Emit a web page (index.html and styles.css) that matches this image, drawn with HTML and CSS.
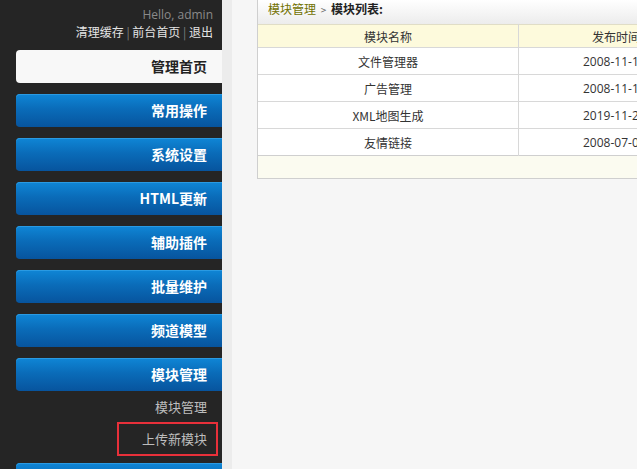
FILE: index.html
```html
<!DOCTYPE html>
<html lang="zh-CN">
<head>
  <meta charset="UTF-8">
  <title>后台管理 - 模块管理</title>
  <link rel="stylesheet" href="styles.css">
</head>
<body>
  <div class="layout">
    <div class="sidebar">
      <div class="user">
        <div class="hello">Hello, admin</div>
        <div class="links"><a href="#">清理缓存</a> | <a href="#">前台首页</a> | <a href="#">退出</a></div>
      </div>
      <ul class="menu">
        <li class="item home">管理首页</li>
        <li class="item">常用操作</li>
        <li class="item">系统设置</li>
        <li class="item">HTML更新</li>
        <li class="item">辅助插件</li>
        <li class="item">批量维护</li>
        <li class="item">频道模型</li>
        <li class="item">模块管理</li>
        <li class="sub first">模块管理</li>
        <li class="sub marked">上传新模块</li>
        <li class="item">会员管理</li>
      </ul>
    </div>

    <div class="main">
      <div class="panel">
        <div class="crumb"><a href="#">模块管理</a> <span class="gt">&gt;</span> <b>模块列表:</b></div>
        <table class="list">
          <tr class="head"><td class="c1">模块名称</td><td class="c2">发布时间</td></tr>
          <tr><td class="c1">文件管理器</td><td class="c2">2008-11-12</td></tr>
          <tr><td class="c1">广告管理</td><td class="c2">2008-11-12</td></tr>
          <tr><td class="c1">XML地图生成</td><td class="c2">2019-11-20</td></tr>
          <tr><td class="c1">友情链接</td><td class="c2">2008-07-08</td></tr>
          <tr class="foot"><td colspan="2"></td></tr>
        </table>
      </div>
    </div>
  </div>
</body>
</html>
```

FILE: styles.css
```css
body {
  margin: 0;
  font-family: "Noto Sans CJK SC", "Liberation Sans", sans-serif;
  background: #f6f6f6;
  overflow: hidden;
}
a {
  text-decoration: none;
  color: inherit;
}
.layout {
  display: flex;
  height: 469px;
}
.sidebar {
  width: 222px;
  flex: none;
  background: #252525;
  overflow: hidden;
}
.user {
  text-align: right;
  padding: 7px 9px 0 0;
  height: 43px;
  box-sizing: border-box;
}
.hello {
  font-family: "Open Sans", "Liberation Sans", sans-serif;
  font-size: 12px;
  line-height: 16px;
  color: #8a8a8a;
}
.links {
  font-size: 12px;
  line-height: 18px;
  color: #808080;
}
.links a {
  color: #e4e4e4;
}
.menu {
  list-style: none;
  margin: 0;
  padding: 0;
}
.item {
  margin: 7px 0 11px 16px;
  height: 33px;
  line-height: 33px;
  padding-right: 15px;
  text-align: right;
  font-size: 14px;
  font-weight: bold;
  color: #fff;
  border-radius: 4px 0 0 4px;
  background: linear-gradient(to bottom, #0f86d6 0%, #0a6cb9 45%, #07549e 100%);
  box-shadow: inset 0 1px 0 #2a9ae2;
}
.item.home {
  margin-top: 7px;
  background: #f8f8f8;
  color: #222;
  box-shadow: none;
}
.sub {
  margin-left: 117px;
  height: 31px;
  line-height: 27px;
  padding-right: 13px;
  text-align: right;
  font-size: 13px;
  color: #bdbdbd;
  box-sizing: border-box;
  border: 2px solid transparent;
}
.sub.first {
  margin-top: -11px;
}
.sub.marked {
  margin-right: 4px;
  padding-right: 9px;
  height: 34px;
  line-height: 30px;
  border-color: #e8303a;
}
.menu .sub + .item {
  margin-top: 7px;
}
.main {
  flex: 1;
  border-left: 10px solid #ececec;
  padding-left: 25px;
  overflow: hidden;
}
.panel {
  width: 500px;
  background: #fff;
  border-left: 1px solid #cfcfcf;
  border-bottom: 1px solid #cfcfcf;
}
.crumb {
  height: 24px;
  line-height: 17px;
  padding-left: 10px;
  font-size: 12px;
  color: #222;
  background: linear-gradient(to bottom, #ffffff, #ececec);
}
.crumb a {
  color: #717100;
}
.crumb .gt {
  font-size: 10px;
  color: #666;
  padding: 0 2px;
}
.list {
  border-collapse: collapse;
  width: 100%;
  font-size: 12px;
  color: #333;
}
.list td {
  height: 26px;
  padding: 0;
  text-align: center;
  border-top: 1px solid #d8d8d8;
}
.list .c1 {
  width: 260px;
  border-right: 1px solid #d8d8d8;
}
.list .c2 {
  text-align: left;
  padding-left: 64px;
  font-family: "Open Sans", "Liberation Sans", sans-serif;
}
.list .head td {
  background: #fdfadc;
  height: 22px;
  border-top: 1px solid #e0ddc6;
}
.list .head .c2 {
  font-family: "Noto Sans CJK SC", sans-serif;
  padding-left: 73px;
}
.list .foot td {
  height: 22px;
  background: #fbfbf0;
  border-top: 1px solid #cfcfcf;
}
```
